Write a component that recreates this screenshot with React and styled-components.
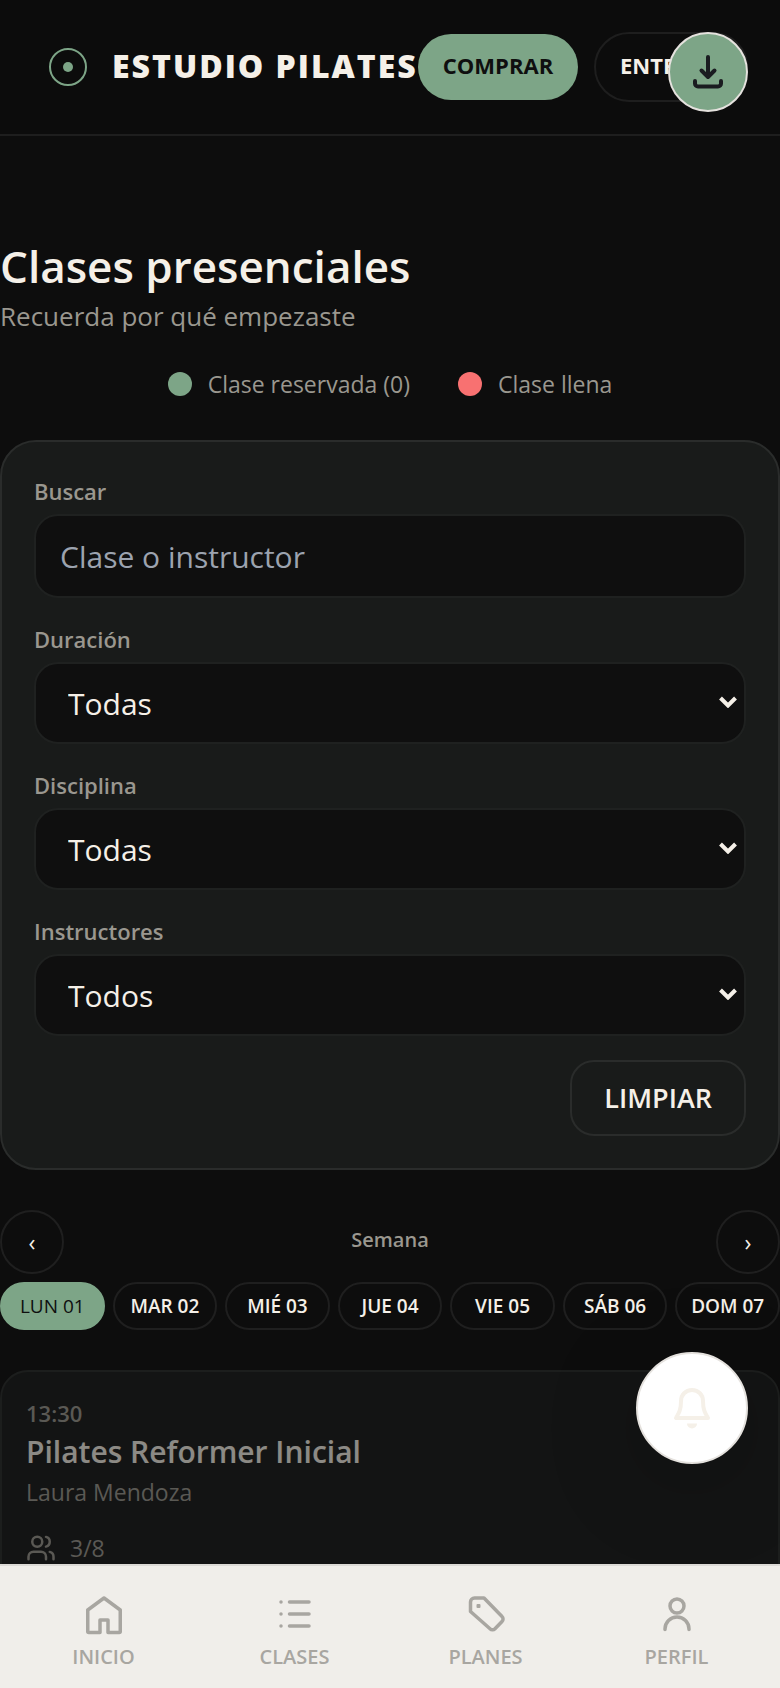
import React, { useState } from 'react'
import styled, { createGlobalStyle, css } from 'styled-components'
import { Users } from 'lucide-react'

const GlobalStyle = createGlobalStyle`
    * {
        box-sizing: border-box;
    }

    body {
        margin: 0;
        background: #0d0d0d;
        color: #f5f0e8;
        font-family: "Open Sans", "Noto Sans", sans-serif;
    }

    h1, h2, p {
        margin: 0;
    }

    button, input, select {
        font-family: inherit;
    }
`

const days = ['LUN 01', 'MAR 02', 'MIÉ 03', 'JUE 04', 'VIE 05', 'SÁB 06', 'DOM 07']

const filters = [
    { id: 'duracion', label: 'Duración', all: 'Todas', options: ['45 min', '60 min'] },
    { id: 'disciplina', label: 'Disciplina', all: 'Todas', options: ['Reformer', 'Mat'] },
    { id: 'instructores', label: 'Instructores', all: 'Todos', options: ['Laura Mendoza'] },
]

const LogoIcon = () => (
    <svg width="40" height="40" viewBox="0 0 40 40" fill="none" aria-hidden="true">
        <circle cx="20" cy="20" r="18" stroke="#7da587" strokeWidth="2" />
        <circle cx="20" cy="20" r="5" fill="#7da587" />
    </svg>
)

const DownloadIcon = () => (
    <Glyph viewBox="0 0 48 48" $stroke={4}>
        <path d="M24 9v19" />
        <path d="M17.5 22.5 24 29l6.500-6.500" />
        <path d="M11 33v2.500a3 3 0 0 0 3 3h20a3 3 0 0 0 3-3V33" />
    </Glyph>
)

const BellIcon = () => (
    <Glyph viewBox="0 0 48 48" $stroke={4}>
        <path d="M24 6c-6.500 0-11 5-11 11 0 9-2 12-5 17h32c-3-5-5-8-5-17 0-6-4.500-11-11-11z" />
        <path d="M19 39.500h10a5 5 0 0 1-10 0z" fill="currentColor" stroke="none" />
    </Glyph>
)

const HomeIcon = () => (
    <Glyph viewBox="0 0 48 48">
        <path d="M24 6 7.750 18v21.500a1 1 0 0 0 1 1H20V28h8v12.500h11.250a1 1 0 0 0 1-1V18z" />
    </Glyph>
)

const ListIcon = () => (
    <Glyph viewBox="0 0 48 48">
        <path d="M18.500 10H38M18.500 22H38M18.500 34H38" />
        <path d="M10 10h.01M10 22h.01M10 34h.01" />
    </Glyph>
)

const TagIcon = () => (
    <Glyph viewBox="0 0 48 48">
        <path d="M12.500 6H22l18 18.500a3.500 3.500 0 0 1 0 5L33 36.800a3.500 3.500 0 0 1-5 0L8.500 19.500V10a4 4 0 0 1 4-4z" />
        <rect x="14.500" y="12" width="4" height="4" rx="1" fill="currentColor" stroke="none" />
    </Glyph>
)

const ProfileIcon = () => (
    <Glyph viewBox="0 0 48 48">
        <circle cx="24" cy="14" r="7" />
        <path d="M12 37.500V37a12 12 0 0 1 24 0v.500" />
    </Glyph>
)

const SelectField = ({ id, label, all, options }) => (
    <Field>
        <FieldLabel htmlFor={id}>{label}</FieldLabel>
        <SelectBox>
            <Select id={id}>
                <option>{all}</option>
                {options.map(option => <option key={option}>{option}</option>)}
            </Select>
            <Chevron width="18" height="12" viewBox="0 0 18 12" aria-hidden="true">
                <path d="M1.500 2 9 9.500 16.500 2" />
            </Chevron>
        </SelectBox>
    </Field>
)

const NavItem = ({ icon, title }) => (
    <NavLink href="#">
        {icon}
        {title}
    </NavLink>
)

export default function App() {
    const [day, setDay] = useState(days[0])

    return (
        <>
            <GlobalStyle />
            <Header>
                <Brand>
                    <LogoIcon />
                    <BrandName>ESTUDIO PILATES</BrandName>
                </Brand>
                <Actions>
                    <BuyButton>COMPRAR</BuyButton>
                    <EnterButton>ENTRAR</EnterButton>
                </Actions>
            </Header>

            <Main>
                <Title>Clases presenciales</Title>
                <Subtitle>Recuerda por qué empezaste</Subtitle>

                <Legend>
                    <LegendItem $color="#7da587">Clase reservada (0)</LegendItem>
                    <LegendItem $color="#f87171">Clase llena</LegendItem>
                </Legend>

                <Filters onSubmit={e => e.preventDefault()}>
                    <Field>
                        <FieldLabel htmlFor="buscar">Buscar</FieldLabel>
                        <Search id="buscar" placeholder="Clase o instructor" />
                    </Field>
                    {filters.map(filter => <SelectField key={filter.id} {...filter} />)}
                    <ClearButton type="reset">LIMPIAR</ClearButton>
                </Filters>

                <Week>
                    <WeekButton>‹</WeekButton>
                    <WeekLabel>Semana</WeekLabel>
                    <WeekButton>›</WeekButton>
                </Week>
                <Days>
                    {days.map(d => (
                        <Day key={d} $active={d === day} onClick={() => setDay(d)}>{d}</Day>
                    ))}
                </Days>

                <ClassCard>
                    <ClassTime>13:30</ClassTime>
                    <ClassName>Pilates Reformer Inicial</ClassName>
                    <Teacher>Laura Mendoza</Teacher>
                    <Spots>
                        <Users size={30} strokeWidth={2} />
                        3/8
                    </Spots>
                </ClassCard>
            </Main>

            <InstallButton aria-label="Instalar">
                <DownloadIcon />
            </InstallButton>
            <BellButton aria-label="Notificaciones">
                <BellIcon />
            </BellButton>

            <BottomNav>
                <NavItem icon={<HomeIcon />} title="INICIO" />
                <NavItem icon={<ListIcon />} title="CLASES" />
                <NavItem icon={<TagIcon />} title="PLANES" />
                <NavItem icon={<ProfileIcon />} title="PERFIL" />
            </BottomNav>
        </>
    )
}

const Glyph = styled.svg`
    width: 48px;
    height: 48px;
    flex-shrink: 0;
    fill: none;
    stroke: currentColor;
    stroke-width: ${props => props.$stroke || 3.5};
    stroke-linecap: round;
    stroke-linejoin: round;
`

const Header = styled.header`
    display: flex;
    align-items: center;
    justify-content: space-between;
    height: 136px;
    padding: 0 32px 0 48px;
    background: #0c0c0c;
    border-bottom: 2px solid #1e1e1e;
`

const Brand = styled.div`
    display: flex;
    align-items: center;
    gap: 24px;
`

const BrandName = styled.span`
    font-size: 32px;
    font-weight: 800;
    letter-spacing: 2px;
    line-height: 40px;
    padding-bottom: 2px;
    white-space: nowrap;
`

const Actions = styled.div`
    display: flex;
    align-items: center;
    gap: 16px;
`

const pill = css`
    border-radius: 36px;
    font-size: 22px;
    font-weight: 700;
    cursor: pointer;
`

const BuyButton = styled.button`
    ${pill}
    width: 160px;
    height: 66px;
    padding: 0 0 4px;
    border: 0;
    background: #7da587;
    color: #0f0f0f;
`

const EnterButton = styled.button`
    ${pill}
    width: 154px;
    height: 70px;
    padding: 0 24px 4px;
    border: 2px solid #1e1e1e;
    background: transparent;
    color: #f5f0e8;
    text-align: left;
`

const Main = styled.main`
    padding-top: 102px;
`

const Title = styled.h1`
    font-size: 44px;
    font-weight: 600;
    line-height: 56px;
`

const Subtitle = styled.p`
    padding-top: 2px;
    color: #9a978f;
    font-size: 26px;
    line-height: 40px;
`

const Legend = styled.div`
    display: flex;
    justify-content: center;
    gap: 48px;
    margin: 32px 0 40px;
`

const LegendItem = styled.span`
    display: flex;
    align-items: center;
    gap: 16px;
    color: #9a978f;
    font-size: 23px;
    line-height: 32px;

    &::before {
        content: '';
        width: 24px;
        height: 24px;
        border-radius: 50%;
        background: ${props => props.$color};
    }
`

const Filters = styled.form`
    display: flex;
    flex-direction: column;
    gap: 24px;
    padding: 32px;
    border: 2px solid #2a2c2b;
    border-radius: 36px;
    background: #191b1a;
`

const Field = styled.div`
    display: flex;
    flex-direction: column;
    gap: 6px;
`

const FieldLabel = styled.label`
    color: #9a978f;
    font-size: 22px;
    font-weight: 600;
    line-height: 34px;
`

const control = css`
    width: 100%;
    border: 2px solid #1f2120;
    border-radius: 24px;
    background: #0f0f0f;
    color: #f5f0e8;
    font-size: 30px;
    outline: none;
`

const Search = styled.input`
    ${control}
    height: 84px;
    padding: 0 24px;

    &::placeholder {
        color: #9ca3af;
    }
`

const SelectBox = styled.div`
    position: relative;
`

const Select = styled.select`
    ${control}
    display: block;
    height: 82px;
    padding: 0 32px;
    appearance: none;
`

const Chevron = styled.svg`
    position: absolute;
    top: 34px;
    right: 9px;
    fill: none;
    stroke: #f5f0e8;
    stroke-width: 4;
    pointer-events: none;
`

const ClearButton = styled.button`
    align-self: flex-end;
    height: 76px;
    padding: 0 32px 2px;
    border: 2px solid #2a2c2b;
    border-radius: 24px;
    background: transparent;
    color: #f5f0e8;
    font-size: 27px;
    font-weight: 600;
    cursor: pointer;
`

const Week = styled.div`
    display: flex;
    align-items: center;
    justify-content: space-between;
    margin-top: 40px;
`

const WeekButton = styled.button`
    width: 64px;
    height: 64px;
    padding: 0;
    border: 2px solid #1f1f1f;
    border-radius: 50%;
    background: transparent;
    color: #f5f0e8;
    font-size: 23px;
    cursor: pointer;
`

const WeekLabel = styled.span`
    padding-bottom: 4px;
    color: #9a978f;
    font-size: 20px;
    font-weight: 600;
    line-height: 32px;
`

const Days = styled.div`
    display: grid;
    grid-template-columns: repeat(7, 1fr);
    gap: 8px;
    margin-top: 8px;
`

const Day = styled.button`
    height: 48px;
    padding: 0;
    border: 2px solid #1f1f1f;
    border-radius: 24px;
    background: transparent;
    color: #f5f0e8;
    font-size: 19px;
    font-weight: 600;
    white-space: nowrap;
    cursor: pointer;

    ${props => props.$active && css`
        border-color: #7da587;
        background: #7da587;
        color: #0f0f0f;
        font-weight: 400;
    `}
`

const ClassCard = styled.article`
    margin-top: 40px;
    padding: 24px;
    border: 2px solid #2a2c2b;
    border-radius: 28px;
    background: #191b1a;
    opacity: .55;
`

const ClassTime = styled.p`
    color: #9a978f;
    font-size: 22px;
    font-weight: 600;
    line-height: 34px;
`

const ClassName = styled.h2`
    font-size: 30px;
    font-weight: 600;
    line-height: 44px;
`

const Teacher = styled.p`
    color: #9a978f;
    font-size: 23px;
    line-height: 36px;
`

const Spots = styled.div`
    display: flex;
    align-items: center;
    gap: 14px;
    margin-top: 20px;
    color: #9a978f;
    font-size: 23px;
    line-height: 36px;
`

const floating = css`
    position: fixed;
    right: 32px;
    display: flex;
    align-items: center;
    justify-content: center;
    padding: 0;
    border: 2px solid #e5e2de;
    border-radius: 50%;
    cursor: pointer;
`

const InstallButton = styled.button`
    ${floating}
    top: 32px;
    width: 80px;
    height: 80px;
    background: #7da587;
    color: #1a1c20;
`

const BellButton = styled.button`
    ${floating}
    bottom: 224px;
    width: 112px;
    height: 112px;
    background: #fff;
    color: #f5f0e8;
    box-shadow: 0 20px 100px rgba(0, 0, 0, .2);
`

const BottomNav = styled.nav`
    position: fixed;
    right: 0;
    bottom: 0;
    left: 0;
    display: grid;
    grid-template-columns: repeat(4, 1fr);
    height: 124px;
    padding: 26px 8px 0;
    border-top: 2px solid #dcdad6;
    background: #f0eeea;
`

const NavLink = styled.a`
    display: flex;
    flex-direction: column;
    align-items: center;
    gap: 3px;
    color: #a8a6a1;
    font-size: 20px;
    font-weight: 600;
    line-height: 28px;
    text-decoration: none;
`
